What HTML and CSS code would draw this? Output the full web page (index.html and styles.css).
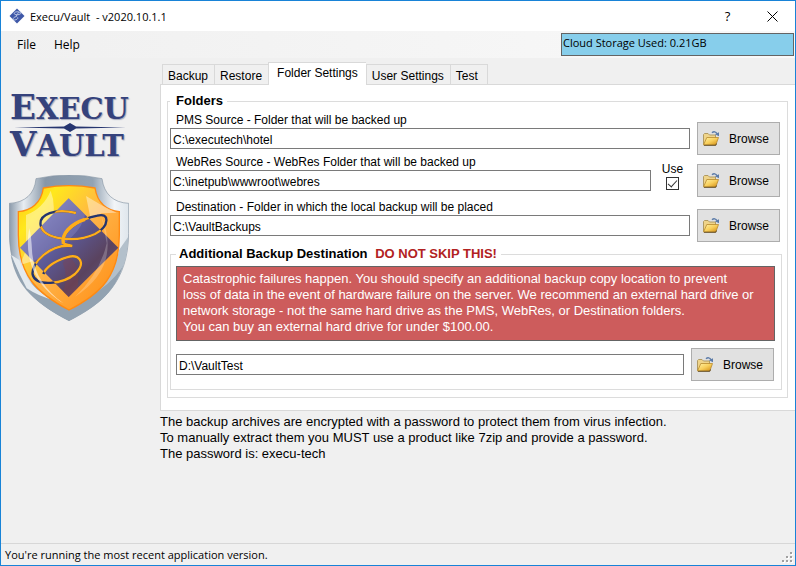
FILE: index.html
```html
<!DOCTYPE html>
<html lang="en">
<head>
    <meta charset="UTF-8">
    <meta name="viewport" content="width=device-width, initial-scale=1.0">
    <title>Execu/Vault</title>
    <link rel="stylesheet" href="styles.css">
</head>
<body>
    <!-- shared folder icon -->
    <svg class="defs" width="0" height="0" aria-hidden="true">
        <defs>
            <linearGradient id="folderFront" x1="0" y1="0" x2="1" y2="1">
                <stop offset="0" stop-color="#fff3a8"/>
                <stop offset="0.5" stop-color="#f8cf5c"/>
                <stop offset="1" stop-color="#d08a10"/>
            </linearGradient>
        </defs>
        <symbol id="folder" viewBox="0 0 16 16">
            <path d="M0.5 13.5V3.5L1.5 2.5H5L6.500 4H12.500V8" fill="#efd48a" stroke="#b09a62"/>
            <path d="M0.500 14L3.800 6.500H15.500L12.800 14Z" fill="url(#folderFront)" stroke="#b98a2c" stroke-width="0.8"/>
            <path d="M1 14.300H12.800L13.500 12.500" fill="none" stroke="#5a4520" stroke-width="0.9"/>
            <path d="M9 1.800C10.500 0.300 13 0.300 14 2.800" fill="none" stroke="#5b7ba8" stroke-width="1.300"/>
            <path d="M11.800 3.200L16 1.200V5.200Z" fill="#5b7ba8"/>
        </symbol>
    </svg>

    <div class="window">
        <header class="titlebar">
            <svg class="app-icon" width="16" height="16" viewBox="0 0 16 16">
                <path d="M8 0.500L15.500 8L8 15.500L0.500 8Z" fill="#3f58a8"/>
                <path d="M10 4C6 3 4 5.500 6 6.500S13 6 12 4.500S7 6 7.500 8.500C4 9 3 12 5.500 12S10 9.500 8.500 9.500" fill="none" stroke="#c3cde8" stroke-width="0.9"/>
            </svg>
            <h1 class="title">Execu/Vault &nbsp;- v2020.10.1.1</h1>
            <button class="caption-button" type="button" aria-label="Help">?</button>
            <button class="caption-button" type="button" aria-label="Close">
                <svg width="11" height="11" viewBox="0 0 11 11"><path d="M0.500 0.500L10.500 10.500M10.500 0.500L0.500 10.500" stroke="#000" fill="none"/></svg>
            </button>
        </header>

        <nav class="menubar">
            <button class="menu-item" type="button">File</button>
            <button class="menu-item" type="button">Help</button>
            <div class="cloud">Cloud Storage Used: 0.21GB</div>
        </nav>

        <div class="content">
            <aside class="brand">
                <div class="wordmark"><span class="cap">E</span>XECU</div>
                <svg class="divider" width="112" height="9" viewBox="0 0 112 9">
                    <path d="M0 4.500L50 3.500L56 0L62 3.500L112 4.500L62 5.500L56 9L50 5.500Z" fill="#26356f"/>
                </svg>
                <div class="wordmark"><span class="cap">V</span>AULT</div>

                <!-- shield -->
                <svg class="shield" width="120" height="146" viewBox="27 45 360 438">
                    <defs>
                        <linearGradient id="steel" x1="0" y1="0" x2="1" y2="0">
                            <stop offset="0" stop-color="#8c9bab"/>
                            <stop offset="0.12" stop-color="#e8edf2"/>
                            <stop offset="0.3" stop-color="#8797a8"/>
                            <stop offset="0.7" stop-color="#93a3b3"/>
                            <stop offset="0.88" stop-color="#f2f5f8"/>
                            <stop offset="1" stop-color="#dfe6ec"/>
                        </linearGradient>
                        <linearGradient id="gold" x1="0" y1="0" x2="1" y2="1">
                            <stop offset="0" stop-color="#ffc414"/>
                            <stop offset="0.2" stop-color="#ffe81c"/>
                            <stop offset="0.5" stop-color="#ffb347"/>
                            <stop offset="1" stop-color="#ff8a10"/>
                        </linearGradient>
                        <linearGradient id="navy" x1="0" y1="0" x2="1" y2="1">
                            <stop offset="0" stop-color="#8d90cd"/>
                            <stop offset="0.45" stop-color="#5c5996"/>
                            <stop offset="0.7" stop-color="#5a435f"/>
                            <stop offset="1" stop-color="#65618f"/>
                        </linearGradient>
                        <clipPath id="diamondClip"><path d="M206 115L355 263L206 411L60 263Z"/></clipPath>
                        <clipPath id="innerClip"><path d="M130 84Q207 70 285 84C292 130 322 152 358 155V225C358 345 305 400 207 450C110 400 55 345 55 225V155C92 152 124 130 130 84Z"/></clipPath>
                        <path id="script" d="M228 159C165 143 116 164 122 196C130 238 225 250 285 222C330 198 329 156 292 167C235 178 183 216 190 251L217 258C150 250 92 310 98 344C108 382 190 372 225 342C260 308 238 280 200 292C160 304 136 325 130 342"/>
                    </defs>
                    <path d="M108 56Q207 34 306 56C312 102 340 128 386 130V220C384 365 310 430 207 482C104 430 30 365 28 220V130C75 128 104 102 108 56Z" fill="url(#steel)" stroke="#8796a4" stroke-width="2"/>
                    <path d="M32 285C50 385 110 432 207 482C304 432 372 385 384 235L352 295L207 451L62 345Z" fill="#92a2b1"/>
                    <path d="M34 285L60 345L80 385Q116 409 160 420C110 395 75 360 58 300Z" fill="#e3e9ee"/>
                    <path d="M384 232C382 280 375 310 365 325Q330 375 270 408Q345 345 357 270Z" fill="#b3c0cb"/>
                    <path d="M130 84Q207 70 285 84C292 130 322 152 358 155V225C358 345 305 400 207 450C110 400 55 345 55 225V155C92 152 124 130 130 84Z" fill="url(#gold)" stroke="#ff8a12" stroke-width="4"/>
                    <g clip-path="url(#innerClip)">
                        <path d="M152 92Q165 125 160 162L78 250V165Q130 145 152 92ZM258 108Q300 135 350 158L305 160L272 178ZM78 270L60 315L110 300Z" fill="#fff" opacity="0.4"/>
                        <path d="M206 115L355 263L206 411L60 263Z" fill="url(#navy)"/>
                        <path d="M206 115L255 164Q240 240 100 303L60 263Z" fill="#a9a9df" opacity="0.25"/>
                        <path d="M200 285Q245 310 232 386L206 411L190 395Q205 340 188 310Z" fill="#8a3f42" opacity="0.3"/>
                        <path d="M305 170Q365 320 225 410Q300 340 320 250Z" fill="#fff" opacity="0.22"/>
                    </g>
                    <use href="#script" fill="none" stroke="#24346f" stroke-width="7"/>
                    <g clip-path="url(#diamondClip)">
                        <use href="#script" fill="none" stroke="#ffad18" stroke-width="7"/>
                    </g>
                    <path d="M255 178C210 192 184 222 190 251" fill="none" stroke="#ffad18" stroke-width="10"/>
                    <path d="M88 205C75 270 85 365 190 430Q100 365 96 270Q94 230 88 205Z" fill="#fff" opacity="0.55"/>
                </svg>
            </aside>

            <main class="main">
                <div class="tabs" role="tablist">
                    <button class="tab" type="button" role="tab">Backup</button>
                    <button class="tab" type="button" role="tab">Restore</button>
                    <button class="tab active" type="button" role="tab" aria-selected="true">Folder Settings</button>
                    <button class="tab" type="button" role="tab">User Settings</button>
                    <button class="tab last" type="button" role="tab">Test</button>
                </div>

                <section class="panel" role="tabpanel">
                    <fieldset class="group">
                        <legend>Folders</legend>
                        <div class="row">
                            <div class="field">
                                <label for="pms">PMS Source - Folder that will be backed up</label>
                                <input class="text" id="pms" type="text" value="C:\executech\hotel">
                            </div>
                            <button class="browse" type="button"><svg width="16" height="16"><use href="#folder"/></svg>Browse</button>
                        </div>
                        <div class="row">
                            <div class="field">
                                <label for="webres">WebRes Source - WebRes Folder that will be backed up</label>
                                <input class="text" id="webres" type="text" value="C:\inetpub\wwwroot\webres">
                            </div>
                            <div class="use">
                                <label for="use">Use</label>
                                <input class="check" id="use" type="checkbox" checked>
                            </div>
                            <button class="browse" type="button"><svg width="16" height="16"><use href="#folder"/></svg>Browse</button>
                        </div>
                        <div class="row spaced">
                            <div class="field">
                                <label for="dest">Destination - Folder in which the local backup will be placed</label>
                                <input class="text" id="dest" type="text" value="C:\VaultBackups">
                            </div>
                            <button class="browse" type="button"><svg width="16" height="16"><use href="#folder"/></svg>Browse</button>
                        </div>

                        <fieldset class="group extra">
                            <legend>Additional Backup Destination <span class="alert">DO NOT SKIP THIS!</span></legend>
                            <p class="warning">Catastrophic failures happen. You should specify an additional backup copy location to prevent<br>
                                loss of data in the event of hardware failure on the server. We recommend an external hard drive or<br>
                                network storage - not the same hard drive as the PMS, WebRes, or Destination folders.<br>
                                You can buy an external hard drive for under $100.00.</p>
                            <div class="row">
                                <div class="field">
                                    <input class="text" type="text" value="D:\VaultTest" aria-label="Additional backup destination">
                                </div>
                                <button class="browse" type="button"><svg width="16" height="16"><use href="#folder"/></svg>Browse</button>
                            </div>
                        </fieldset>
                    </fieldset>
                </section>

                <p class="note">The backup archives are encrypted with a password to protect them from virus infection.<br>
                    To manually extract them you MUST use a product like 7zip and provide a password.<br>
                    The password is: execu-tech</p>
            </main>
        </div>

        <footer class="statusbar">
            <span>You're running the most recent application version.</span>
            <svg class="grip" width="11" height="11" viewBox="0 0 11 11">
                <path d="M9 1h2v2h-2zM5 5h2v2h-2zM9 5h2v2h-2zM1 9h2v2h-2zM5 9h2v2h-2zM9 9h2v2h-2z" fill="#fff"/>
                <path d="M8 0h2v2h-2zM4 4h2v2h-2zM8 4h2v2h-2zM0 8h2v2h-2zM4 8h2v2h-2zM8 8h2v2h-2z" fill="#a0a0a0"/>
            </svg>
        </footer>
    </div>
</body>
</html>
```
FILE: styles.css
```css
* {
    box-sizing: border-box;
}
body {
    margin: 0;
    font-family: "Liberation Sans", Arial, sans-serif;
    font-size: 12px;
    color: #000;
}
button, input {
    font: inherit;
    color: inherit;
    margin: 0;
}
p {
    margin: 0;
}
.defs {
    position: absolute;
}
.window {
    display: flex;
    flex-direction: column;
    min-height: 100vh;
    border: 1px solid #1883d7;
    background: #f0f0f0;
}

/* title bar and menu */
.titlebar, .menubar, .statusbar {
    font-family: "Open Sans", "Noto Sans", sans-serif;
    font-size: 11px;
}
.titlebar {
    display: flex;
    align-items: center;
    height: 30px;
    padding-left: 8px;
    background: #fff;
}
.title {
    flex: 1;
    margin: 0 0 0 5px;
    font-size: 11px;
    font-weight: normal;
}
.caption-button {
    display: flex;
    justify-content: center;
    align-items: center;
    width: 45px;
    height: 30px;
    padding: 0;
    border: none;
    background: none;
    font-size: 13px;
}
.menubar {
    display: flex;
    align-items: center;
    height: 27px;
    padding: 0 1px 0 10px;
    background: linear-gradient(to right, #f0f0f0, #f9f9f9);
}
.menu-item {
    padding: 0 6px;
    margin-right: 6px;
    border: none;
    background: none;
    font-size: 12px;
}
.cloud {
    width: 233px;
    height: 23px;
    margin-left: auto;
    padding-left: 1px;
    border: 1px solid #646464;
    background: #87ceeb;
    line-height: 18px;
}

/* logo column */
.content {
    display: flex;
    flex: 1;
}
.brand {
    flex: 0 0 159px;
    padding: 34px 0 0 8px;
}
.wordmark {
    padding-left: 1px;
    font-family: "DejaVu Serif", serif;
    font-weight: bold;
    font-size: 29px;
    line-height: 31px;
    color: #35427c;
    white-space: nowrap;
    text-shadow: 1px 1px 1px #a5a9bd;
}
.wordmark .cap {
    font-size: 34px;
}
.divider {
    display: block;
    margin: -2px 0 -3px 5px;
}
.shield {
    display: block;
    margin-top: 13px;
}

/* tabs */
.main {
    flex: 1;
    min-width: 0;
    padding-top: 4px;
}
.tabs {
    position: relative;
    display: flex;
    align-items: flex-end;
    height: 23px;
    padding-left: 2px;
}
.tab {
    height: 21px;
    padding: 2px 6px 0 5px;
    border: 1px solid #d9d9d9;
    border-right: none;
    background: #f0f0f0;
    line-height: 16px;
    white-space: nowrap;
}
.tab.active {
    height: 23px;
    padding: 0 8px 2px;
    border-bottom: none;
    background: #fff;
}
.tab.last {
    padding-right: 9px;
    border-right: 1px solid #d9d9d9;
}
.panel {
    padding: 8px 7px 12px 6px;
    margin-top: -1px;
    border: 1px solid #d9d9d9;
    border-right: none;
    background: #fff;
}

/* groups */
.group {
    min-width: 0;
    margin: 0;
    padding: 4px 5px 7px 2px;
    border: 1px solid #dcdcdc;
}
.group legend {
    padding: 0 4px 0 6px;
    font-size: 13px;
    font-weight: bold;
    line-height: 16px;
}
.extra legend {
    padding-left: 3px;
}
.alert {
    margin-left: 4px;
    color: #b22222;
}
.row {
    display: flex;
    align-items: flex-end;
    gap: 7px;
    padding-right: 2px;
}
.spaced {
    margin-top: 3px;
}
.field {
    flex: 1;
    padding-bottom: 6px;
}
.field label {
    display: block;
    padding-left: 6px;
    line-height: 15px;
}
.text {
    display: block;
    width: 100%;
    height: 21px;
    padding: 2px 2px 0;
    border: 1px solid #7a7a7a;
    border-radius: 0;
    background: #fff;
}
.use {
    display: flex;
    flex-direction: column;
    align-items: center;
    width: 29px;
    margin-right: 3px;
    padding-bottom: 7px;
}
.use label {
    line-height: 16px;
}
.check {
    appearance: none;
    display: flex;
    justify-content: center;
    width: 13px;
    height: 13px;
    border: 1px solid #333;
    background: #fff;
}
.check:checked::before {
    content: "";
    width: 4px;
    height: 8px;
    border: solid #333;
    border-width: 0 1px 1px 0;
    transform: rotate(42deg);
}
.browse {
    display: flex;
    align-items: center;
    gap: 10px;
    width: 83px;
    height: 33px;
    padding: 0 5px;
    border: 1px solid #adadad;
    background: #e1e1e1;
}
.extra {
    margin-top: 4px;
    padding: 4px 6px 8px 5px;
}
.extra .row {
    padding-right: 1px;
}
.warning {
    margin-bottom: 7px;
    padding: 4px 6px 5px;
    border: 1px solid #646464;
    background: #cd5c5c;
    color: #fff;
    line-height: 16px;
}
.note {
    padding-top: 3px;
    line-height: 16px;
}
.warning, .note {
    font-size: 13px;
}

/* status bar */
.statusbar {
    display: flex;
    justify-content: space-between;
    align-items: center;
    height: 22px;
    padding: 0 2px 0 4px;
    border-top: 1px solid #d7d7d7;
}
.grip {
    align-self: flex-end;
    margin-bottom: 2px;
}
```
